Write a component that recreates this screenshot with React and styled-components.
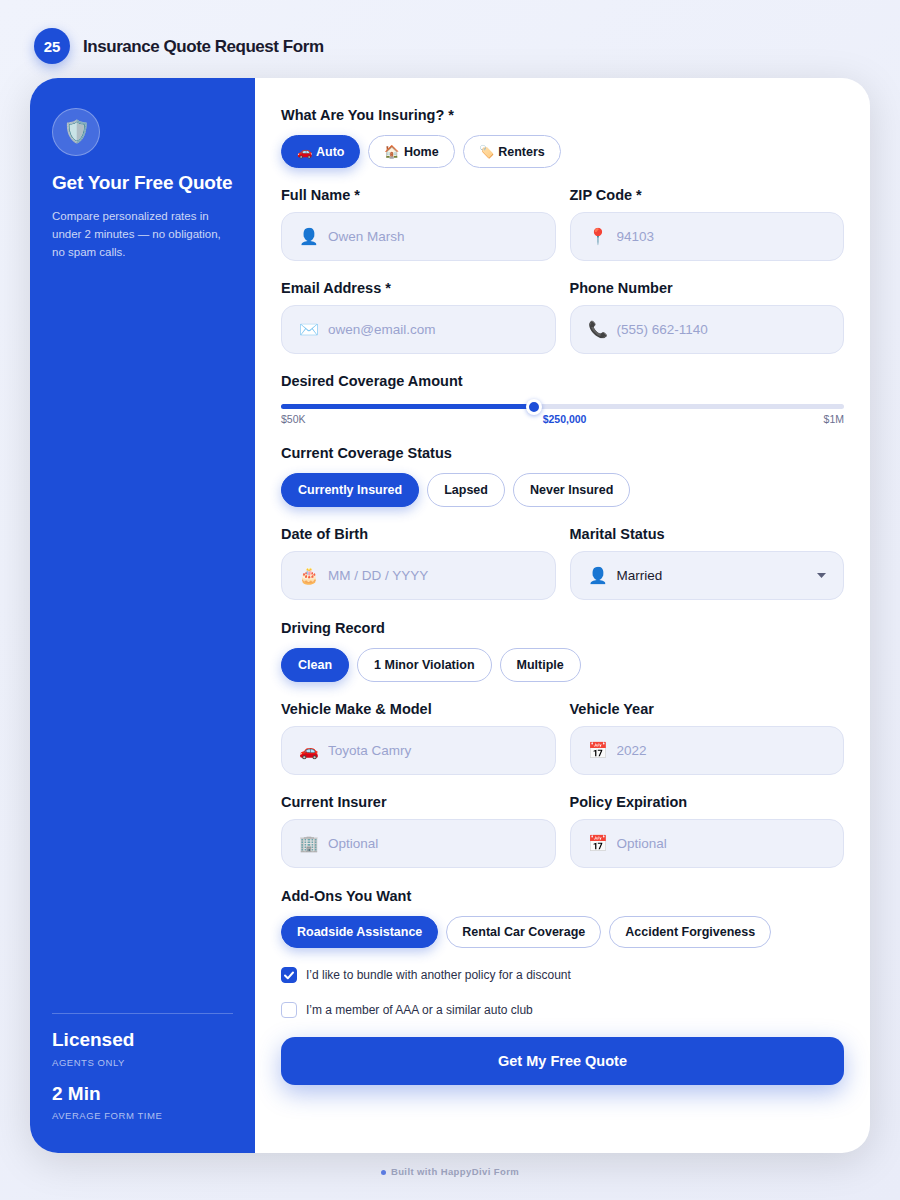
import styled, { createGlobalStyle } from "styled-components";

const Global = createGlobalStyle`
  * { box-sizing: border-box; }
  html, body { margin: 0; padding: 0; }
  body {
    min-height: 1200px;
    background: linear-gradient(135deg, #f0f3fc 0%, #e9ecf8 100%);
    font-family: "Liberation Sans", Arial, sans-serif;
    color: #0f172a;
  }
`;

const Page = styled.div`
  width: 900px;
  height: 1200px;
  padding: 28px 30px 0;
`;

const Header = styled.header`
  display: flex;
  align-items: center;
  gap: 13px;
  height: 36px;
  padding-left: 4px;
  margin-bottom: 14px;
`;

const Badge = styled.div`
  width: 36px;
  height: 36px;
  border-radius: 50%;
  background: #1d4ed8;
  color: #fff;
  font-size: 15px;
  font-weight: 700;
  display: flex;
  align-items: center;
  justify-content: center;
  box-shadow: 0 4px 12px rgba(29, 78, 216, 0.35);
`;

const PageTitle = styled.h1`
  margin: 2px 0 0;
  font-size: 17px;
  font-weight: 700;
  letter-spacing: -0.45px;
  color: #1a1a2e;
`;

const Card = styled.main`
  display: flex;
  height: 1075px;
  border-radius: 28px;
  overflow: hidden;
  background: #fff;
  box-shadow: 0 8px 40px rgba(0, 0, 0, 0.13);
`;

const Sidebar = styled.aside`
  width: 225px;
  flex-shrink: 0;
  background: #1d4ed8;
  color: #fff;
  padding: 30px 22px 31px;
  display: flex;
  flex-direction: column;
`;

const ShieldCircle = styled.div`
  width: 48px;
  height: 48px;
  border-radius: 50%;
  background: rgba(255, 255, 255, 0.18);
  border: 1.5px solid rgba(255, 255, 255, 0.3);
  display: flex;
  align-items: center;
  justify-content: center;
  font-size: 22px;
  margin-bottom: 15px;
`;

const SideHeading = styled.h2`
  margin: 0 0 13px;
  font-size: 19px;
  line-height: 23px;
  font-weight: 700;
  letter-spacing: -0.2px;
  white-space: nowrap;
`;

const SideText = styled.p`
  margin: 0;
  font-size: 11.5px;
  line-height: 18px;
  color: rgba(255, 255, 255, 0.78);
`;

const Stats = styled.div`
  margin-top: auto;
  border-top: 1px solid rgba(255, 255, 255, 0.25);
  padding-top: 15px;
`;

const StatValue = styled.div`
  font-size: 19px;
  line-height: 22px;
  font-weight: 700;
`;

const StatLabel = styled.div`
  font-size: 9.5px;
  line-height: 12px;
  margin: ${({ $last }) => ($last ? "5px 0 0" : "6px 0 14px")};
  letter-spacing: 0.55px;
  text-transform: uppercase;
  color: rgba(255, 255, 255, 0.65);
`;

const Form = styled.form`
  flex: 1;
  padding: 29px 26px 0;
  display: flex;
  flex-direction: column;
  gap: 19px;
`;

const Group = styled.div`
  display: flex;
  flex-direction: column;
  margin-top: ${({ $top }) => $top || 0}px;
`;

const Row = styled.div`
  display: grid;
  grid-template-columns: 1fr 1fr;
  gap: 14px;
`;

const Label = styled.label`
  display: block;
  font-size: 14.5px;
  line-height: 17px;
  font-weight: 700;
  margin-bottom: ${({ $gap }) => $gap || 8}px;
`;

const Pills = styled.div`
  display: flex;
  gap: 8px;
`;

const Pill = styled.button`
  height: ${({ $h }) => $h || 34}px;
  padding: 0 ${({ $px }) => $px || 16}px;
  border-radius: 999px;
  border: 1px solid ${({ $active }) => ($active ? "#1d4ed8" : "#b9c4ec")};
  background: ${({ $active }) => ($active ? "#1d4ed8" : "#fff")};
  color: ${({ $active }) => ($active ? "#fff" : "#0f172a")};
  font-family: inherit;
  font-size: 12.5px;
  font-weight: 700;
  box-shadow: ${({ $active }) => ($active ? "0 4px 12px rgba(29, 78, 216, 0.3)" : "none")};
`;

const Field = styled.div`
  height: 49px;
  padding: 0 17px;
  display: flex;
  align-items: center;
  gap: 9px;
  background: #eef1fa;
  border: 1px solid #dde2f3;
  border-radius: 14px;
`;

const FieldIcon = styled.span`
  width: 20px;
  flex-shrink: 0;
  text-align: center;
  font-size: 16px;
  line-height: 20px;
`;

const TextInput = styled.input`
  flex: 1;
  min-width: 0;
  padding: 0;
  border: none;
  outline: none;
  background: transparent;
  font-family: inherit;
  font-size: 13.5px;
  color: #0f172a;

  &::placeholder {
    color: #9aa3cf;
    opacity: 1;
  }
`;

const SelectValue = styled.span`
  flex: 1;
  font-size: 13.5px;
  color: #1a1a2e;
`;

const Caret = styled.svg`
  width: 9px;
  height: 5px;
  fill: #5a5f7a;
`;

const Track = styled.div`
  position: relative;
  height: 5px;
  margin: 6px 0 4px;
  border-radius: 3px;
  background: #dde1f2;
`;

const Fill = styled.div`
  height: 100%;
  border-radius: 3px;
  background: #1d4ed8;
`;

const Thumb = styled.div`
  position: absolute;
  top: 50%;
  width: 16px;
  height: 16px;
  margin: -8px 0 0 -8px;
  border-radius: 50%;
  background: #1d4ed8;
  border: 3px solid #fff;
  box-shadow: 0 1px 4px rgba(29, 78, 216, 0.4);
`;

const Scale = styled.div`
  display: flex;
  justify-content: space-between;
  font-size: 10.5px;
  line-height: 13px;
  color: #6b7090;
`;

const ScaleValue = styled.span`
  color: #1d4ed8;
  font-weight: 700;
`;

const CheckRow = styled.label`
  display: flex;
  align-items: center;
  gap: 9px;
  font-size: 12px;
  line-height: 16px;
  color: #2a2f4a;
`;

const Box = styled.span`
  width: 16px;
  height: 16px;
  border-radius: 4px;
  border: 1px solid ${({ $on }) => ($on ? "#1d4ed8" : "#b9c4ec")};
  background: ${({ $on }) => ($on ? "#1d4ed8" : "#fff")};
  display: flex;
  align-items: center;
  justify-content: center;
`;

const Submit = styled.button`
  height: 48px;
  border: none;
  border-radius: 14px;
  background: #1d4ed8;
  color: #fff;
  font-family: inherit;
  font-size: 14.5px;
  font-weight: 700;
  box-shadow: 0 8px 24px rgba(29, 78, 216, 0.35);
`;

const Footer = styled.footer`
  margin-top: 13px;
  display: flex;
  align-items: center;
  justify-content: center;
  gap: 5px;
  font-size: 9.5px;
  line-height: 12px;
  font-weight: 700;
  letter-spacing: 0.4px;
  color: #9aa0bb;
`;

const Dot = styled.span`
  width: 5px;
  height: 5px;
  border-radius: 50%;
  background: #5b7be0;
`;

const InputField = ({ label, icon, placeholder }) => (
  <div>
    <Label>{label}</Label>
    <Field>
      <FieldIcon>{icon}</FieldIcon>
      <TextInput placeholder={placeholder} />
    </Field>
  </div>
);

export default function App() {
  return (
    <Page>
      <Global />
      <Header>
        <Badge>25</Badge>
        <PageTitle>Insurance Quote Request Form</PageTitle>
      </Header>
      <Card>
        <Sidebar>
          <ShieldCircle>🛡️</ShieldCircle>
          <SideHeading>Get Your Free Quote</SideHeading>
          <SideText>Compare personalized rates in under 2 minutes — no obligation, no spam calls.</SideText>
          <Stats>
            <StatValue>Licensed</StatValue>
            <StatLabel>Agents only</StatLabel>
            <StatValue>2 Min</StatValue>
            <StatLabel $last>Average form time</StatLabel>
          </Stats>
        </Sidebar>
        <Form>
          <Group>
            <Label $gap={11}>What Are You Insuring? *</Label>
            <Pills>
              <Pill $active $h={33} $px={15}>🚗 Auto</Pill>
              <Pill $h={33} $px={15}>🏠 Home</Pill>
              <Pill $h={33} $px={15}>🏷️ Renters</Pill>
            </Pills>
          </Group>
          <Row>
            <InputField label="Full Name *" icon="👤" placeholder="Owen Marsh" />
            <InputField label="ZIP Code *" icon="📍" placeholder="94103" />
          </Row>
          <Row>
            <InputField label="Email Address *" icon="✉️" placeholder="owen@email.com" />
            <InputField label="Phone Number" icon="📞" placeholder="(555) 662-1140" />
          </Row>
          <Group>
            <Label>Desired Coverage Amount</Label>
            <Track>
              <Fill style={{ width: "44.9%" }} />
              <Thumb style={{ left: "44.9%" }} />
            </Track>
            <Scale>
              <span>$50K</span>
              <ScaleValue>$250,000</ScaleValue>
              <span>$1M</span>
            </Scale>
          </Group>
          <Group>
            <Label $gap={11}>Current Coverage Status</Label>
            <Pills>
              <Pill $active>Currently Insured</Pill>
              <Pill>Lapsed</Pill>
              <Pill>Never Insured</Pill>
            </Pills>
          </Group>
          <Row>
            <InputField label="Date of Birth" icon="🎂" placeholder="MM / DD / YYYY" />
            <div>
              <Label>Marital Status</Label>
              <Field>
                <FieldIcon>👤</FieldIcon>
                <SelectValue>Married</SelectValue>
                <Caret viewBox="0 0 9 5"><path d="M0 0h9L4.5 5z" /></Caret>
              </Field>
            </div>
          </Row>
          <Group $top={1}>
            <Label $gap={11}>Driving Record</Label>
            <Pills>
              <Pill $active>Clean</Pill>
              <Pill>1 Minor Violation</Pill>
              <Pill>Multiple</Pill>
            </Pills>
          </Group>
          <Row>
            <InputField label="Vehicle Make & Model" icon="🚗" placeholder="Toyota Camry" />
            <InputField label="Vehicle Year" icon="📅" placeholder="2022" />
          </Row>
          <Row>
            <InputField label="Current Insurer" icon="🏢" placeholder="Optional" />
            <InputField label="Policy Expiration" icon="📅" placeholder="Optional" />
          </Row>
          <Group $top={1}>
            <Label $gap={11}>Add-Ons You Want</Label>
            <Pills>
              <Pill $active $h={32} $px={15}>Roadside Assistance</Pill>
              <Pill $h={32} $px={15}>Rental Car Coverage</Pill>
              <Pill $h={32} $px={15}>Accident Forgiveness</Pill>
            </Pills>
          </Group>
          <CheckRow>
            <Box $on>
              <svg width="12" height="12" viewBox="0 0 12 12" fill="none" stroke="#fff" strokeWidth="2" strokeLinecap="round" strokeLinejoin="round">
                <path d="M2 6.5l2.8 2.8L10 3.5" />
              </svg>
            </Box>
            I’d like to bundle with another policy for a discount
          </CheckRow>
          <CheckRow>
            <Box />
            I’m a member of AAA or a similar auto club
          </CheckRow>
          <Submit type="button">Get My Free Quote</Submit>
        </Form>
      </Card>
      <Footer><Dot />Built with HappyDivi Form</Footer>
    </Page>
  );
}
